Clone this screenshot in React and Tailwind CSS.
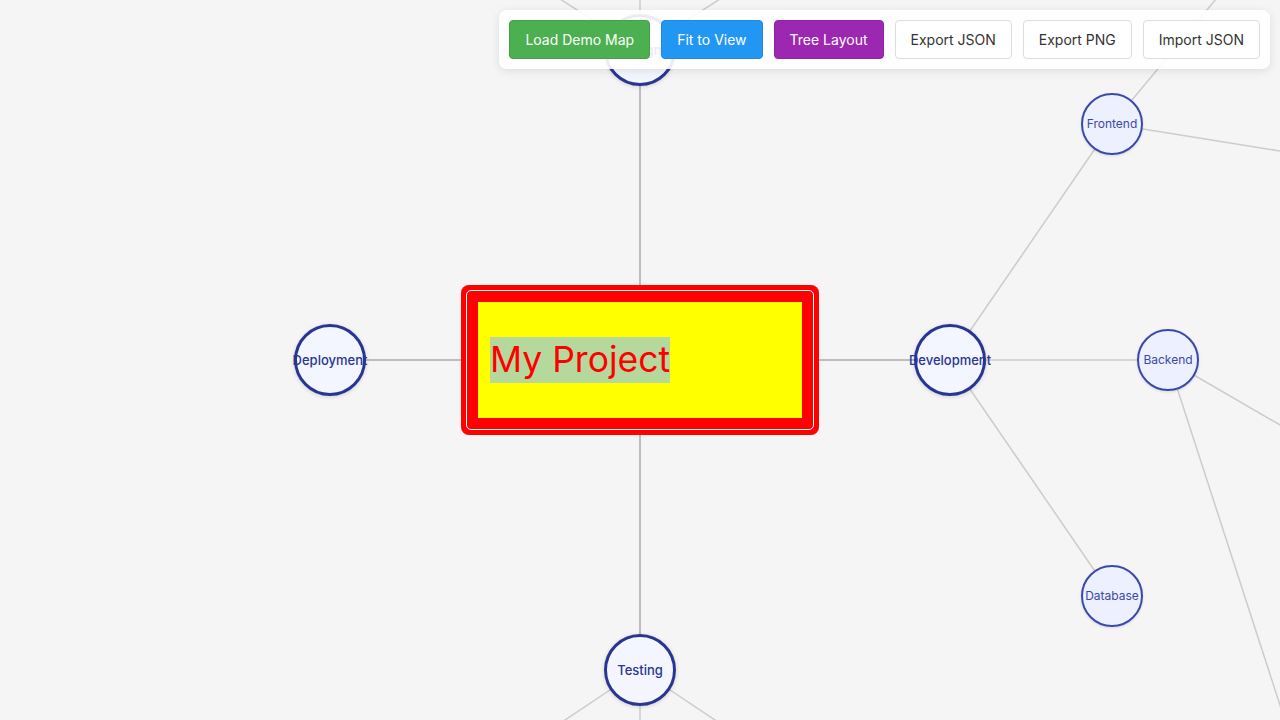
import React from 'react';

const edges = [
  // root edges
  { x1: 640, y1: 360, x2: 640, y2: 50, main: true },
  { x1: 640, y1: 360, x2: 330, y2: 360, main: true },
  { x1: 640, y1: 360, x2: 950, y2: 360, main: true },
  { x1: 640, y1: 360, x2: 640, y2: 670, main: true },
  // design children
  { x1: 640, y1: 50, x2: 483, y2: -50 },
  { x1: 640, y1: 50, x2: 640, y2: -60 },
  { x1: 640, y1: 50, x2: 797, y2: -50 },
  // testing children
  { x1: 640, y1: 670, x2: 490, y2: 770 },
  { x1: 640, y1: 670, x2: 640, y2: 780 },
  { x1: 640, y1: 670, x2: 790, y2: 770 },
  // development children
  { x1: 950, y1: 360, x2: 1112, y2: 124 },
  { x1: 950, y1: 360, x2: 1168, y2: 360 },
  { x1: 950, y1: 360, x2: 1112, y2: 596 },
  // frontend children
  { x1: 1112, y1: 124, x2: 1236, y2: -25 },
  { x1: 1112, y1: 124, x2: 1330, y2: 159 },
  // backend children
  { x1: 1168, y1: 360, x2: 1330, y2: 454 },
  { x1: 1168, y1: 360, x2: 1290, y2: 736 },
];

const bigNodes = [
  { label: 'Design', x: 640, y: 50 },
  { label: 'Deployment', x: 330, y: 360 },
  { label: 'Development', x: 950, y: 360 },
  { label: 'Testing', x: 640, y: 670 },
];

const smallNodes = [
  { label: 'Frontend', x: 1112, y: 124 },
  { label: 'Backend', x: 1168, y: 360 },
  { label: 'Database', x: 1112, y: 596 },
];

const BigNode = ({ label, x, y }) => (
  <div className="absolute w-[72px] h-[72px]" style={{ left: x - 36, top: y - 36 }}>
    <div className="absolute inset-0 rounded-full bg-[#f3f6fe] shadow-[0_1px_4px_rgba(0,0,0,0.15)]"></div>
    <div className="absolute inset-0 flex items-center justify-center">
      <span className="text-[13px] font-medium text-[#283593] whitespace-nowrap leading-none">{label}</span>
    </div>
    <div className="absolute inset-0 rounded-full border-[3px] border-[#283593]"></div>
  </div>
);

const SmallNode = ({ label, x, y }) => (
  <div className="absolute w-[62px] h-[62px]" style={{ left: x - 31, top: y - 31 }}>
    <div className="absolute inset-0 rounded-full bg-[#edf0fe] shadow-[0_1px_3px_rgba(0,0,0,0.12)]"></div>
    <div className="absolute inset-0 flex items-center justify-center">
      <span className="text-[12px] text-[#3949ab] whitespace-nowrap leading-none">{label}</span>
    </div>
    <div className="absolute inset-0 rounded-full border-[2.5px] border-[#3949ab]"></div>
  </div>
);

const Btn = ({ children, className }) => (
  <button className={`h-[39px] px-[15px] rounded-[4px] border text-[14px] leading-5 whitespace-nowrap ${className}`}>
    {children}
  </button>
);

export default function App() {
  return (
    <div className="relative w-[1280px] h-[720px] overflow-hidden bg-[#f5f5f5] font-['Inter','Liberation_Sans',sans-serif]">
      <svg className="absolute inset-0" width="1280" height="720">
        {edges.map((e, i) => (
          <line
            key={i}
            x1={e.x1}
            y1={e.y1}
            x2={e.x2}
            y2={e.y2}
            stroke={e.main ? '#bdbdbd' : '#cccccc'}
            strokeWidth={e.main ? 2 : 1.5}
          />
        ))}
      </svg>

      {bigNodes.map((n) => <BigNode key={n.label} {...n} />)}
      {smallNodes.map((n) => <SmallNode key={n.label} {...n} />)}

      {/* root node */}
      <div className="absolute left-[461px] top-[285px] rounded-[8px] bg-[#ff0000] p-[5px]">
        <div className="rounded-[5px] border border-white p-[11px]">
          <div className="w-[324px] h-[116px] bg-[#ffff00] flex items-center pl-3">
            <span className="bg-[#b5d99c] text-[#ff0000] text-[35.5px] leading-[46px] whitespace-nowrap">My Project</span>
          </div>
        </div>
      </div>

      {/* toolbar */}
      <div className="absolute top-[10px] right-[10px] flex gap-[11px] p-2.5 rounded-[8px] bg-white/90 shadow-[0_2px_10px_rgba(0,0,0,0.1)]">
        <Btn className="bg-[#4caf50] border-[#45a049] text-white">Load Demo Map</Btn>
        <Btn className="bg-[#2196f3] border-[#1e88e5] text-white">Fit to View</Btn>
        <Btn className="bg-[#9c27b0] border-[#8e24aa] text-white">Tree Layout</Btn>
        <Btn className="bg-white border-[#dddddd] text-[#333333]">Export JSON</Btn>
        <Btn className="bg-white border-[#dddddd] text-[#333333]">Export PNG</Btn>
        <Btn className="bg-white border-[#dddddd] text-[#333333]">Import JSON</Btn>
      </div>
    </div>
  );
}
